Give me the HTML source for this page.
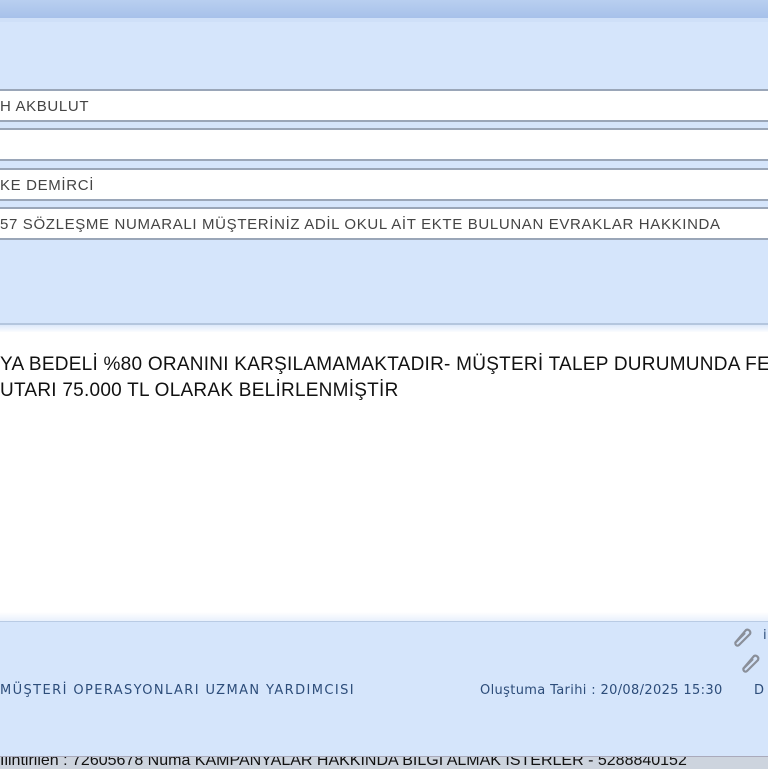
<!DOCTYPE html>
<html><head><meta charset="utf-8"><style>
body{margin:0;width:768px;height:768px;overflow:hidden;background:#d5e5fb;font-family:"Liberation Sans",sans-serif;position:relative}
.top{position:absolute;left:0;top:0;width:768px;height:18px;background:linear-gradient(#b9cff0,#a7c1ea)}
.top2{position:absolute;left:0;top:18px;width:768px;height:4px;background:#cfe0f8}
.inp{position:absolute;left:-2px;width:772px;height:29px;background:#fff;border-top:2px solid #9aa6b8;border-bottom:2px solid #9aa6b8;font-size:15px;color:#444;line-height:31px;letter-spacing:0.65px;padding-left:2px;box-sizing:content-box;white-space:nowrap}
.sep{position:absolute;left:0;top:323px;width:768px;height:2px;background:#b4c6de}
.white{position:absolute;left:0;top:332px;width:768px;height:283px;background:#fff}
.fade{position:absolute;left:0;top:325px;width:768px;height:8px;background:linear-gradient(#dde9fa,#fff)}
.fade2{position:absolute;left:0;top:612px;width:768px;height:10px;background:linear-gradient(#fff,#e6effc)}
.fline{position:absolute;left:0;top:621px;width:768px;height:1px;background:#b9cbe4}
.body{position:absolute;left:0;top:352px;font-size:19px;line-height:26px;color:#111;letter-spacing:0.25px;white-space:nowrap}
.ft{position:absolute;font-size:13px;color:#2d4d7a;font-family:"DejaVu Sans",sans-serif;white-space:nowrap}
.bot{position:absolute;left:0;top:756px;width:768px;height:12px;background:#cdd4de;border-top:1px solid #aab;font-size:16px;color:#111;line-height:20px;white-space:nowrap;overflow:hidden}
</style></head><body>
<div class="top"></div><div class="top2"></div>
<div class="inp" style="top:89px">H AKBULUT</div>
<div class="inp" style="top:128px"></div>
<div class="inp" style="top:168px">KE DEMİRCİ</div>
<div class="inp" style="top:207px">57 SÖZLEŞME NUMARALI MÜŞTERİNİZ ADİL OKUL AİT EKTE BULUNAN EVRAKLAR HAKKINDA</div>
<div class="sep"></div><div class="fade"></div><div class="white"></div><div class="fade2"></div><div class="fline"></div>
<div class="body">YA BEDELİ %80 ORANINI KARŞILAMAMAKTADIR- MÜŞTERİ TALEP DURUMUNDA FE<br>UTARI 75.000 TL OLARAK BELİRLENMİŞTİR</div>
<svg style="position:absolute;left:730px;top:624px" width="24" height="24" viewBox="0 0 24 24"><path d="M5 19 L16 6 a3 3 0 0 1 4 4 L9 21 a2 2 0 0 1 -3 -3 L15 9" fill="none" stroke="#8a8f99" stroke-width="2.2"/></svg>
<svg style="position:absolute;left:738px;top:650px" width="24" height="24" viewBox="0 0 24 24"><path d="M5 19 L16 6 a3 3 0 0 1 4 4 L9 21 a2 2 0 0 1 -3 -3 L15 9" fill="none" stroke="#8a8f99" stroke-width="2.2"/></svg>
<div class="ft" style="left:763px;top:628px">i</div>
<div class="ft" style="left:0;top:683px;letter-spacing:1.4px">MÜŞTERİ OPERASYONLARI UZMAN YARDIMCISI</div>
<div class="ft" style="left:480px;top:683px;letter-spacing:0.35px">Oluştuma Tarihi : 20/08/2025 15:30</div>
<div class="ft" style="left:754px;top:683px">D</div>
<div class="bot"><span style="position:relative;top:-6px">İlintirilen : 72605678 Numa KAMPANYALAR HAKKINDA BILGI ALMAK ISTERLER - 5288840152</span></div>
</body></html>
